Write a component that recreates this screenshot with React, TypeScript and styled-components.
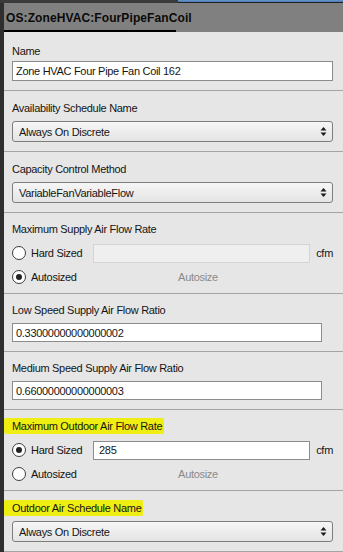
import React from 'react'
import styled, { createGlobalStyle } from 'styled-components'

const GlobalStyle = createGlobalStyle`
    html, body {
        margin: 0;
        padding: 0;
        background: #e6e6e6;
    }
    body {
        font-family: "Liberation Sans", Arial, sans-serif;
        font-size: 11px;
        letter-spacing: -0.3px;
        color: #151515;
    }
`

const Frame = styled.div`
    width: 343px;
    height: 552px;
    display: flex;
    flex-direction: column;
    overflow: hidden;
    background: #2f2f2f;
`
const TopStrip = styled.div`
    height: 3px;
    display: flex;
`
const TopDark = styled.div`
    width: 178px;
    background: #3a3a3a;
`
const TopBlue = styled.div`
    flex: 1;
    background: linear-gradient(#6a96cf, #4a78b3);
    border-bottom: 1px solid #202020;
`
const Main = styled.div`
    flex: 1;
    display: flex;
    flex-direction: column;
    margin-left: 4px;
`
const Header = styled.div`
    height: 29px;
    background: #818080;
    display: flex;
    align-items: flex-end;
`
const Tab = styled.div`
    padding: 0 2px 5px 2px;
    width: 172px;
    box-sizing: border-box;
    border-bottom: 2px solid #000;
    font-weight: bold;
    font-size: 12px;
    letter-spacing: 0.1px;
    color: #0a0a0a;
`
const Body = styled.div`
    flex: 1;
    background: #e6e6e6;
    display: flex;
    flex-direction: column;
`
const Section = styled.div<{ $top?: number; $gap?: number; $bottom?: number }>`
    display: flex;
    flex-direction: column;
    gap: ${p => p.$gap ?? 5}px;
    padding: ${p => p.$top ?? 9}px 10px ${p => p.$bottom ?? 9}px 8px;
    border-bottom: 1px solid #a4a4a4;
`
const Label = styled.div`
    line-height: 16px;
    height: 16px;
    display: flex;
`
const LabelText = styled.span<{ $highlight?: boolean }>`
    ${p => p.$highlight && `
        background: #eeee12;
        margin-left: -8px;
        padding: 0 2px 0 8px;
        border-radius: 2px;
    `}
`
const TextBox = styled.div<{ $short?: boolean; $h?: number }>`
    height: ${p => p.$h ?? 20}px;
    box-sizing: border-box;
    width: ${p => (p.$short ? '310px' : '321px')};
    border: 1px solid #8c8c8c;
    background: #ffffff;
    padding: 0 3px;
    display: flex;
    align-items: center;
    white-space: nowrap;
`
const Select = styled.div`
    height: 21px;
    box-sizing: border-box;
    width: 321px;
    border: 1px solid #7d7d7d;
    border-radius: 3px;
    background: linear-gradient(#f6f6f6, #e4e4e4);
    display: flex;
    align-items: center;
    justify-content: space-between;
    padding: 0 5px 0 6px;
`
const Rows = styled.div`
    display: flex;
    flex-direction: column;
    gap: 4px;
`
const RadioRow = styled.div`
    height: 20px;
    display: flex;
    align-items: center;
`
const RadioLabel = styled.label`
    width: 81px;
    display: flex;
    align-items: center;
    gap: 5px;
`
const Radio = styled.span<{ $checked?: boolean }>`
    width: 12px;
    height: 12px;
    border-radius: 50%;
    border: 1px solid #3c3c3c;
    background: #fff;
    display: flex;
    align-items: center;
    justify-content: center;
    &::after {
        content: '';
        width: 6px;
        height: 6px;
        border-radius: 50%;
        background: ${p => (p.$checked ? '#222' : 'transparent')};
    }
`
const ValueBox = styled.div<{ $disabled?: boolean }>`
    width: 217px;
    height: 19px;
    box-sizing: border-box;
    border: 1px solid ${p => (p.$disabled ? '#d4d4d4' : '#8c8c8c')};
    background: ${p => (p.$disabled ? '#efefef' : '#fff')};
    display: flex;
    align-items: center;
    padding: 0 5px;
`
const Unit = styled.span`
    margin-left: auto;
`
const AutosizeText = styled.span`
    width: 210px;
    text-align: center;
    color: #8a8a8a;
`

const Arrows = () => (
    <svg width="7" height="11" viewBox="0 0 7 11">
        <path d="M3.5 1 L6.5 4.5 L0.5 4.5 Z" fill="#1c1c1c" />
        <path d="M3.5 10 L6.5 6.5 L0.5 6.5 Z" fill="#1c1c1c" />
    </svg>
)

const SelectField = ({ label, value, highlight }: { label: string; value: string; highlight?: boolean }) => (
    <Section $gap={5}>
        <Label><LabelText $highlight={highlight}>{label}</LabelText></Label>
        <Select>
            <span>{value}</span>
            <Arrows />
        </Select>
    </Section>
)

const SizedField = ({ label, hardSized, value, highlight }: { label: string; hardSized: boolean; value: string; highlight?: boolean }) => (
    <Section $gap={6} $top={8} $bottom={6}>
        <Label><LabelText $highlight={highlight}>{label}</LabelText></Label>
        <Rows>
            <RadioRow>
                <RadioLabel><Radio $checked={hardSized} />Hard Sized</RadioLabel>
                <ValueBox $disabled={!hardSized}>{value}</ValueBox>
                <Unit>cfm</Unit>
            </RadioRow>
            <RadioRow>
                <RadioLabel><Radio $checked={!hardSized} />Autosized</RadioLabel>
                <AutosizeText>Autosize</AutosizeText>
            </RadioRow>
        </Rows>
    </Section>
)

const RatioField = ({ label, value }: { label: string; value: string }) => (
    <Section $top={8} $gap={5}>
        <Label>{label}</Label>
        <TextBox $short $h={19}>{value}</TextBox>
    </Section>
)

const App = () => {
    return (
        <>
            <GlobalStyle />
            <Frame>
                <TopStrip>
                    <TopDark />
                    <TopBlue />
                </TopStrip>
                <Main>
                    <Header>
                        <Tab>OS:ZoneHVAC:FourPipeFanCoil</Tab>
                    </Header>
                    <Body>
                        <Section $top={11} $gap={2}>
                            <Label>Name</Label>
                            <TextBox>Zone HVAC Four Pipe Fan Coil 162</TextBox>
                        </Section>
                        <SelectField label="Availability Schedule Name" value="Always On Discrete" />
                        <SelectField label="Capacity Control Method" value="VariableFanVariableFlow" />
                        <SizedField label="Maximum Supply Air Flow Rate" hardSized={false} value="" />
                        <RatioField label="Low Speed Supply Air Flow Ratio" value="0.33000000000000002" />
                        <RatioField label="Medium Speed Supply Air Flow Ratio" value="0.66000000000000003" />
                        <SizedField label="Maximum Outdoor Air Flow Rate" hardSized value="285" highlight />
                        <SelectField label="Outdoor Air Schedule Name" value="Always On Discrete" highlight />
                    </Body>
                </Main>
            </Frame>
        </>
    )
}

export default App
